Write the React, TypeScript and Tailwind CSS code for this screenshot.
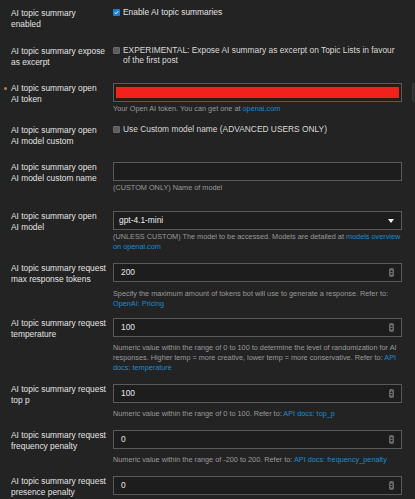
import React from 'react'

const font = { fontFamily: '"Liberation Sans", Arial, sans-serif' }

function Label({ lines, dot }: { lines: string[]; dot?: boolean }) {
    return (
        <div className="relative w-[102px] shrink-0 text-[8.4px] leading-[11px] text-[#e2e2e2]">
            {dot && <span className="absolute left-[-7px] top-[4px] w-[3px] h-[3px] rounded-full bg-[#c27d3a]" />}
            {lines.map((l, i) => (
                <div key={i} className="whitespace-nowrap">{l}</div>
            ))}
        </div>
    )
}

function Help({ children, mt }: { children: React.ReactNode; mt: string }) {
    return <div className={`${mt} text-[7.3px] leading-[10px] text-[#9a9a9a] whitespace-nowrap`}>{children}</div>
}

function A({ children }: { children: React.ReactNode }) {
    return <span className="text-[#1a8bd0]">{children}</span>
}

function Checkbox({ checked }: { checked?: boolean }) {
    return checked ? (
        <span className="mt-[2px] flex items-center justify-center w-[7px] h-[7px] rounded-[1px] bg-[#1c7fd0] shrink-0">
            <svg width="5" height="5" viewBox="0 0 10 10">
                <path d="M1.5 5.2 L4 7.6 L8.6 2.4" stroke="white" strokeWidth="2" fill="none" />
            </svg>
        </span>
    ) : (
        <span className="mt-[2px] w-[7px] h-[7px] rounded-[1px] bg-[#5c5c5c] border border-[#6a6a6a] shrink-0" />
    )
}

function Spinner() {
    return (
        <span className="flex flex-col items-center justify-center gap-[1px] w-[5px] h-[9px] rounded-[2px] bg-[#6a6a6a]">
            <svg width="3" height="2" viewBox="0 0 6 4"><path d="M0 4 L3 0 L6 4Z" fill="#1e1e1e" /></svg>
            <svg width="3" height="2" viewBox="0 0 6 4"><path d="M0 0 L3 4 L6 0Z" fill="#1e1e1e" /></svg>
        </span>
    )
}

function NumInput({ value }: { value: string }) {
    return (
        <div className="flex items-center justify-between h-[19px] w-[289px] border border-[#5a5a5a] bg-[#1d1d1d] pl-[7px] pr-[7px] text-[8.4px] text-[#e6e6e6]">
            <span>{value}</span>
            <Spinner />
        </div>
    )
}

export default function App() {
    return (
        <div className="w-[415px] h-[499px] overflow-hidden bg-[#232323] pl-[11px] pt-[8px]" style={font}>
            {/* enabled */}
            <div className="flex h-[38px]">
                <Label lines={['AI topic summary', 'enabled']} />
                <div className="flex items-start gap-[3px] text-[8.4px] leading-[10px] text-[#e2e2e2] -mt-[1px]">
                    <Checkbox checked />
                    <span className="ml-[0px]">Enable AI topic summaries</span>
                </div>
            </div>

            {/* expose */}
            <div className="flex h-[37px]">
                <Label lines={['AI topic summary expose', 'as excerpt']} />
                <div className="flex items-start gap-[3px] text-[8.4px] leading-[10px] text-[#d8d8d8] -mt-[1px]">
                    <Checkbox />
                    <span className="whitespace-nowrap">
                        EXPERIMENTAL: Expose AI summary as excerpt on Topic Lists in favour
                        <br />
                        of the first post
                    </span>
                </div>
            </div>

            {/* token */}
            <div className="flex h-[42px]">
                <Label lines={['AI topic summary open', 'AI token']} dot />
                <div>
                    <div className="flex items-start">
                        <div className="h-[19px] w-[289px] border border-[#5a5a5a] bg-[#2a1c12] px-[2px] py-[3px]">
                            <div className="h-full w-full bg-[#f2211b]" />
                        </div>
                        <div className="ml-[10px] h-[19px] w-[20px] rounded-l-[2px] bg-[#2e2e2e] border border-[#3a3a3a]" />
                    </div>
                    <Help mt="mt-[2px]">
                        Your Open AI token. You can get one at <A>openai.com</A>
                    </Help>
                </div>
            </div>

            {/* custom */}
            <div className="flex h-[37px]">
                <Label lines={['AI topic summary open', 'AI model custom']} />
                <div className="flex items-start gap-[3px] text-[8.4px] leading-[10px] text-[#d8d8d8] -mt-[1px]">
                    <Checkbox />
                    <span className="whitespace-nowrap">Use Custom model name (ADVANCED USERS ONLY)</span>
                </div>
            </div>

            {/* custom name */}
            <div className="flex h-[49px]">
                <Label lines={['AI topic summary open', 'AI model custom name']} />
                <div>
                    <div className="h-[19px] w-[289px] border border-[#5a5a5a] bg-[#1d1d1d]" />
                    <Help mt="mt-[2px]">(CUSTOM ONLY) Name of model</Help>
                </div>
            </div>

            {/* model */}
            <div className="flex h-[52px]">
                <Label lines={['AI topic summary open', 'AI model']} />
                <div>
                    <div className="flex items-center justify-between h-[19px] w-[289px] border border-[#5a5a5a] bg-[#1d1d1d] pl-[5px] pr-[7px] text-[8.4px] text-[#ececec]">
                        <span>gpt-4.1-mini</span>
                        <svg width="6" height="4" viewBox="0 0 6 4"><path d="M0 0 H6 L3 4Z" fill="#f2f2f2" /></svg>
                    </div>
                    <Help mt="mt-[2px]">
                        (UNLESS CUSTOM) The model to be accessed. Models are detailed at <A>models overview</A>
                        <br />
                        <A>on openai.com</A>
                    </Help>
                </div>
            </div>

            {/* max tokens */}
            <div className="flex h-[55px]">
                <Label lines={['AI topic summary request', 'max response tokens']} />
                <div>
                    <NumInput value="200" />
                    <Help mt="mt-[7px]">
                        Specify the maximum amount of tokens bot will use to generate a response. Refer to:
                        <br />
                        <A>OpenAI: Pricing</A>
                    </Help>
                </div>
            </div>

            {/* temperature */}
            <div className="flex h-[66px]">
                <Label lines={['AI topic summary request', 'temperature']} />
                <div>
                    <NumInput value="100" />
                    <Help mt="mt-[6px]">
                        Numeric value within the range of 0 to 100 to determine the level of randomization for AI
                        <br />
                        responses. Higher temp = more creative, lower temp = more conservative. Refer to: <A>API</A>
                        <br />
                        <A>docs: temperature</A>
                    </Help>
                </div>
            </div>

            {/* top p */}
            <div className="flex h-[46px]">
                <Label lines={['AI topic summary request', 'top p']} />
                <div>
                    <NumInput value="100" />
                    <Help mt="mt-[6px]">
                        Numeric value within the range of 0 to 100. Refer to: <A>API docs: top_p</A>
                    </Help>
                </div>
            </div>

            {/* frequency */}
            <div className="flex h-[46px]">
                <Label lines={['AI topic summary request', 'frequency penalty']} />
                <div>
                    <NumInput value="0" />
                    <Help mt="mt-[6px]">
                        Numeric value within the range of -200 to 200. Refer to: <A>API docs: frequency_penalty</A>
                    </Help>
                </div>
            </div>

            {/* presence */}
            <div className="flex h-[46px]">
                <Label lines={['AI topic summary request', 'presence penalty']} />
                <div>
                    <NumInput value="0" />
                </div>
            </div>
        </div>
    )
}
